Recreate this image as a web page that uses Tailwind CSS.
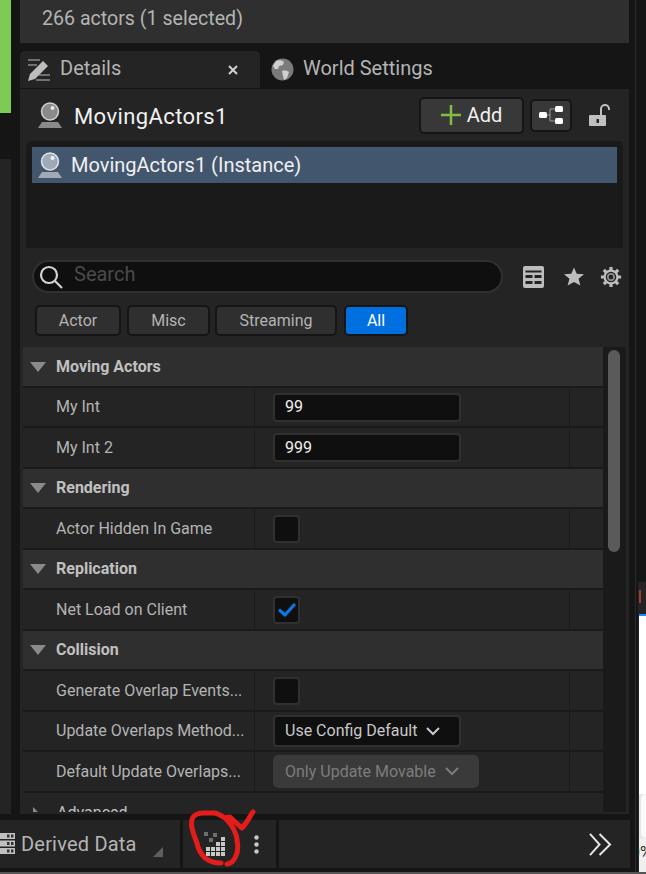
<!DOCTYPE html>
<html>
<head>
  <meta charset="UTF-8">
  <title>Details</title>
  <script src="https://cdn.jsdelivr.net/npm/@tailwindcss/browser@4"></script>
</head>
<body class="bg-[#151515]">
<div class="relative w-[646px] h-[874px] overflow-hidden bg-[#151515] font-['Roboto',sans-serif]">

  <div class="flex h-[814px]">
    <!-- left sliver of the viewport behind -->
    <div class="w-[11px] flex flex-col">
      <div class="h-[113px] bg-[#7ccb55]"></div>
      <div class="h-[46px]"></div>
      <div class="flex-1 bg-[#242424]"></div>
    </div>
    <div class="w-[9px]"></div>

    <div class="w-[609px] flex flex-col">
      <div class="h-[43px] bg-[#2f2f2f] pl-[22px] flex items-center text-[19.6px] text-[#b4b4b4] pb-[6px]">266 actors (1 selected)</div>

      <!-- tabs -->
      <div class="h-[37px] mt-[8px] flex">
        <div class="w-[240px] bg-[#242424] rounded-t-[5px] flex items-center pl-[7px] pr-[22px]">
          <svg width="24" height="24" viewBox="0 0 24 24" fill="none">
            <path d="M1 2h12M1 7h9M12 17h11M9 22h14" stroke="#8a8a8a" stroke-width="1.500"/>
            <path d="M1 23l2-7L16 3l5 5L8 21z" fill="#bdbdbd"/>
          </svg>
          <span class="ml-[9px] pb-[3px] text-[20px] text-[#b4b4b4] flex-1">Details</span>
          <svg width="10" height="10" viewBox="0 0 10 10"><path d="M1 1l8 8M9 1l-8 8" stroke="#d2d2d2" stroke-width="2"/></svg>
        </div>
        <div class="flex items-center pl-[11px]">
          <svg width="23" height="23" viewBox="0 0 23 23">
            <circle cx="11.5" cy="11.5" r="11" fill="#7b7b7b"/>
            <path d="M5 3c3-1 6-1 8 1l-1 3-4 1-1 3-3 0-2-3zM11 13c3-1 6 0 7 1l-2 6-3 2-1-4z" fill="#cfcfcf"/>
          </svg>
          <span class="ml-[9px] pb-[3px] text-[20px] text-[#b4b4b4]">World Settings</span>
        </div>
      </div>

      <!-- panel -->
      <div class="flex-1 mt-[1px] bg-[#242424] flex flex-col min-h-0">
        <div class="h-[52px] flex items-center pl-[18px] shrink-0">
          <svg width="24" height="26" viewBox="0 0 24 26">
            <circle cx="12" cy="9.500" r="8.500" fill="#8a8a8a" stroke="#d0d0d0" stroke-width="1.500"/>
            <circle cx="14.500" cy="6" r="2" fill="#e8e8e8"/>
            <path d="M4 20h16l4 6H0z" fill="#8a8a8a"/>
          </svg>
          <span class="ml-[12px] pt-[2px] text-[22px] tracking-[0.4px] text-[#f0f0f0]">MovingActors1</span>
          <div class="ml-auto flex items-center">
            <div class="w-[105px] h-[37px] rounded-[5px] bg-[#383838] border-2 border-[#151515] flex items-center justify-center gap-[6px] text-[20px] text-[#f0f0f0]">
              <svg width="20" height="20" viewBox="0 0 20 20"><path d="M10 0v20M0 10h20" stroke="#7fbf3f" stroke-width="2.500"/></svg>
              Add
            </div>
            <div class="ml-[6px] w-[42px] h-[33px] rounded-[5px] bg-[#383838] border-2 border-[#151515] flex items-center justify-center">
              <svg width="24" height="18" viewBox="0 0 24 18">
                <path d="M8 9h3M11 3h5M11 15h5M11 3v12" stroke="#9a9a9a" stroke-width="1" fill="none"/>
                <rect x="0" y="6" width="8" height="6" rx="1.500" fill="#fff"/>
                <rect x="16" y="0" width="8" height="6" rx="1.500" fill="#fff"/>
                <rect x="16" y="12" width="8" height="6" rx="1.500" fill="#fff"/>
              </svg>
            </div>
            <svg class="ml-[17px] mr-[18px]" width="22" height="22" viewBox="0 0 22 22">
              <rect x="0" y="11" width="17" height="11" rx="1" fill="#c0c0c0"/>
              <rect x="7.500" y="15" width="2.500" height="4" fill="#242424"/>
              <path d="M12 11V5a4 4 0 0 1 8 0v1" fill="none" stroke="#c0c0c0" stroke-width="2"/>
            </svg>
          </div>
        </div>

        <!-- selection list -->
        <div class="mx-[6px] h-[107px] shrink-0 rounded-t-[5px] bg-[#1a1a1a] pt-[6px] px-[6px]">
          <div class="h-[36px] bg-[#42566e] flex items-center text-[20px] text-[#f0f0f0]">
            <svg class="ml-[6px]" width="24" height="26" viewBox="0 0 24 26">
              <circle cx="12" cy="9.500" r="8.500" fill="#a0aab6" stroke="#dfe3e8" stroke-width="1.500"/>
              <circle cx="14.500" cy="6" r="2" fill="#f0f0f0"/>
              <path d="M4 20h16l4 6H0z" fill="#a0aab6"/>
            </svg>
            <span class="ml-[9px]">MovingActors1 (Instance)</span>
          </div>
        </div>

        <!-- search -->
        <div class="flex items-center h-[33px] mt-[12px] pl-[12px] shrink-0">
          <div class="w-[471px] h-[33px] rounded-full bg-[#0f0f0f] border-2 border-[#303030] flex items-center pl-[5px]">
            <svg width="24" height="24" viewBox="0 0 24 24" fill="none" stroke="#d2d2d2" stroke-width="2.200">
              <circle cx="10" cy="10" r="8"/><path d="M16 16l7 7"/>
            </svg>
            <span class="ml-[11px] pb-[5px] text-[20px] text-[#4a4a4a]">Search</span>
          </div>
          <svg class="ml-[20px]" width="21" height="22" viewBox="0 0 21 22">
            <rect x="0" y="0" width="21" height="22" rx="2" fill="#bdbdbd"/>
            <rect x="2.500" y="4.500" width="16" height="2" fill="#242424"/>
            <rect x="2.500" y="9" width="7" height="3" fill="#242424"/><rect x="11.500" y="9" width="7" height="3" fill="#242424"/>
            <rect x="2.500" y="15" width="7" height="3" fill="#242424"/><rect x="11.500" y="15" width="7" height="3" fill="#242424"/>
          </svg>
          <svg class="ml-[20px]" width="20" height="19" viewBox="0 0 22 20">
            <path d="M11 0l3 7 8 .6-6 5 2 7.400-7-4-7 4 2-7.400-6-5 8-.6z" fill="#bdbdbd"/>
          </svg>
          <svg class="ml-[16px]" width="22" height="22" viewBox="0 0 24 24" fill="none">
            <path d="M12 1v5M12 18v5M1 12h5M18 12h5M4.200 4.200l3.500 3.500M16.300 16.300l3.500 3.500M4.200 19.800l3.500-3.500M16.300 7.700l3.500-3.500" stroke="#bdbdbd" stroke-width="3.500"/>
            <circle cx="12" cy="12" r="7" fill="#242424" stroke="#bdbdbd" stroke-width="2.500"/>
            <circle cx="12" cy="12" r="3.500" stroke="#8a8a8a" stroke-width="2"/>
          </svg>
        </div>

        <!-- category pills -->
        <div class="flex items-center pl-[15px] mt-[12px] h-[31px] shrink-0 text-[16px] text-[#b4b4b4]">
          <div class="w-[86px] h-[31px] rounded-[5px] bg-[#2f2f2f] border-2 border-[#151515] flex items-center justify-center">Actor</div>
          <div class="ml-[6px] w-[83px] h-[31px] rounded-[5px] bg-[#2f2f2f] border-2 border-[#151515] flex items-center justify-center">Misc</div>
          <div class="ml-[5px] w-[122px] h-[31px] rounded-[5px] bg-[#2f2f2f] border-2 border-[#151515] flex items-center justify-center">Streaming</div>
          <div class="ml-[7px] w-[64px] h-[31px] rounded-[5px] bg-[#0070e0] border-2 border-[#151515] flex items-center justify-center text-white">All</div>
        </div>

        <!-- property table -->
        <div class="mt-[11px] flex-1 min-h-0 flex px-[3px] pb-[2px]">
          <div class="w-[580px] flex flex-col overflow-hidden text-[16px]">

            <div class="h-[40.500px] shrink-0 pt-px bg-[#2f2f2f] border-b-2 border-[#1a1a1a] flex items-center font-bold text-[#c0c0c0]">
              <svg class="ml-[7px]" width="16" height="10" viewBox="0 0 16 10"><path d="M0 0h16l-8 10z" fill="#8a8a8a"/></svg>
              <span class="ml-[10px]">Moving Actors</span>
            </div>
            <div class="h-[40.500px] shrink-0 pt-px border-b-2 border-[#1a1a1a] flex">
              <div class="w-[232px] border-r border-[#1a1a1a] pl-[33px] flex items-center text-[#b4b4b4]">My Int</div>
              <div class="w-[315px] border-r border-[#1a1a1a] pl-[18px] flex items-center">
                <div class="w-[188px] h-[29px] rounded-[4px] bg-[#0f0f0f] border-2 border-[#303030] pl-[10px] flex items-center text-[#f0f0f0]">99</div>
              </div>
            </div>
            <div class="h-[40.500px] shrink-0 pt-px border-b-2 border-[#1a1a1a] flex">
              <div class="w-[232px] border-r border-[#1a1a1a] pl-[33px] flex items-center text-[#b4b4b4]">My Int 2</div>
              <div class="w-[315px] border-r border-[#1a1a1a] pl-[18px] flex items-center">
                <div class="w-[188px] h-[29px] rounded-[4px] bg-[#0f0f0f] border-2 border-[#303030] pl-[10px] flex items-center text-[#f0f0f0]">999</div>
              </div>
            </div>

            <div class="h-[40.500px] shrink-0 pt-px bg-[#2f2f2f] border-b-2 border-[#1a1a1a] flex items-center font-bold text-[#c0c0c0]">
              <svg class="ml-[7px]" width="16" height="10" viewBox="0 0 16 10"><path d="M0 0h16l-8 10z" fill="#8a8a8a"/></svg>
              <span class="ml-[10px]">Rendering</span>
            </div>
            <div class="h-[40.500px] shrink-0 pt-px border-b-2 border-[#1a1a1a] flex">
              <div class="w-[232px] border-r border-[#1a1a1a] pl-[33px] flex items-center text-[#b4b4b4]">Actor Hidden In Game</div>
              <div class="w-[315px] border-r border-[#1a1a1a] pl-[18px] flex items-center">
                <div class="w-[27px] h-[28px] rounded-[4px] bg-[#0f0f0f] border-2 border-[#303030]"></div>
              </div>
            </div>

            <div class="h-[40.500px] shrink-0 pt-px bg-[#2f2f2f] border-b-2 border-[#1a1a1a] flex items-center font-bold text-[#c0c0c0]">
              <svg class="ml-[7px]" width="16" height="10" viewBox="0 0 16 10"><path d="M0 0h16l-8 10z" fill="#8a8a8a"/></svg>
              <span class="ml-[10px]">Replication</span>
            </div>
            <div class="h-[40.500px] shrink-0 pt-px border-b-2 border-[#1a1a1a] flex">
              <div class="w-[232px] border-r border-[#1a1a1a] pl-[33px] flex items-center text-[#b4b4b4]">Net Load on Client</div>
              <div class="w-[315px] border-r border-[#1a1a1a] pl-[18px] flex items-center">
                <div class="w-[27px] h-[28px] rounded-[4px] bg-[#0f0f0f] border-2 border-[#303030] flex items-center justify-center">
                  <svg width="18" height="14" viewBox="0 0 18 14"><path d="M2 7.500l5 4.500 9-10" fill="none" stroke="#0a78e6" stroke-width="3.200" stroke-linecap="round" stroke-linejoin="round"/></svg>
                </div>
              </div>
            </div>

            <div class="h-[40.500px] shrink-0 pt-px bg-[#2f2f2f] border-b-2 border-[#1a1a1a] flex items-center font-bold text-[#c0c0c0]">
              <svg class="ml-[7px]" width="16" height="10" viewBox="0 0 16 10"><path d="M0 0h16l-8 10z" fill="#8a8a8a"/></svg>
              <span class="ml-[10px]">Collision</span>
            </div>
            <div class="h-[40.500px] shrink-0 pt-px border-b-2 border-[#1a1a1a] flex">
              <div class="w-[232px] border-r border-[#1a1a1a] pl-[33px] flex items-center text-[#b4b4b4]">Generate Overlap Events...</div>
              <div class="w-[315px] border-r border-[#1a1a1a] pl-[18px] flex items-center">
                <div class="w-[27px] h-[28px] rounded-[4px] bg-[#0f0f0f] border-2 border-[#303030]"></div>
              </div>
            </div>
            <div class="h-[40.500px] shrink-0 pt-px border-b-2 border-[#1a1a1a] flex">
              <div class="w-[232px] border-r border-[#1a1a1a] pl-[33px] flex items-center text-[#b4b4b4]">Update Overlaps Method...</div>
              <div class="w-[315px] border-r border-[#1a1a1a] pl-[18px] flex items-center">
                <div class="w-[188px] h-[32px] rounded-[4px] bg-[#0f0f0f] border-2 border-[#303030] pl-[10px] flex items-center text-[#c8c8c8]">
                  Use Config Default
                  <svg class="ml-[9px]" width="14" height="9" viewBox="0 0 14 9"><path d="M1 1l6 6 6-6" fill="none" stroke="#c8c8c8" stroke-width="2"/></svg>
                </div>
              </div>
            </div>
            <div class="h-[40.500px] shrink-0 pt-px border-b-2 border-[#1a1a1a] flex">
              <div class="w-[232px] border-r border-[#1a1a1a] pl-[33px] flex items-center text-[#b4b4b4]">Default Update Overlaps...</div>
              <div class="w-[315px] border-r border-[#1a1a1a] pl-[18px] flex items-center">
                <div class="w-[206px] h-[33px] rounded-[5px] bg-[#3a3a3a] pl-[12px] flex items-center text-[#7c7c7c]">
                  Only Update Movable
                  <svg class="ml-[9px]" width="14" height="9" viewBox="0 0 14 9"><path d="M1 1l6 6 6-6" fill="none" stroke="#7c7c7c" stroke-width="2"/></svg>
                </div>
              </div>
            </div>

            <div class="h-[40.500px] shrink-0 flex items-center text-[#c0c0c0]">
              <svg class="ml-[10px]" width="11" height="11" viewBox="0 0 11 11"><path d="M0 0l11 11H0z" fill="#8a8a8a"/></svg>
              <span class="ml-[13px]">Advanced</span>
            </div>
          </div>
          <!-- scrollbar -->
          <div class="w-[23px] bg-[#1a1a1a] pt-[3px] pl-[5px]">
            <div class="w-[12px] h-[202px] rounded-full bg-[#5a5a5a]"></div>
          </div>
        </div>
      </div>
    </div>
  </div>

  <!-- status bar -->
  <div class="mt-[6px] h-[48px] w-[630px] bg-[#242424] flex items-center text-[20px] text-[#b4b4b4]">
    <div class="w-[180px] h-full flex items-center">
      <svg class="-mt-px" width="15" height="21" viewBox="0 0 15 21">
        <g fill="#c0c0c0"><rect y="0" width="15" height="6"/><rect y="7.500" width="15" height="6"/><rect y="15" width="15" height="6"/></g>
        <g fill="#333"><rect x="7" y="1.500" width="2.500" height="3"/><rect x="11" y="1.500" width="2.500" height="3"/><rect x="7" y="9" width="2.500" height="3"/><rect x="11" y="9" width="2.500" height="3"/><rect x="7" y="16.500" width="2.500" height="3"/><rect x="11" y="16.500" width="2.500" height="3"/></g>
      </svg>
      <span class="ml-[6px] tracking-[0.2px]">Derived Data</span>
      <svg class="ml-[16px] mt-[16px]" width="10" height="10" viewBox="0 0 10 10"><path d="M10 0v10H0z" fill="#5f5f5f"/></svg>
    </div>
    <div class="w-[3px] h-full bg-[#151515]"></div>
    <div class="w-[93px] h-full flex items-center pl-[20px]">
      <svg width="22" height="24" viewBox="0 0 22 24">
        <g fill="#c8c8c8">
          <rect x="3" y="15" width="4" height="4"/><rect x="8" y="15" width="4" height="4"/><rect x="13" y="15" width="4" height="4"/><rect x="18" y="15" width="4" height="4"/>
          <rect x="3" y="20" width="4" height="4"/><rect x="8" y="20" width="4" height="4"/><rect x="13" y="20" width="4" height="4"/><rect x="18" y="20" width="4" height="4"/>
          <rect x="13" y="10" width="4" height="4"/><rect x="18" y="10" width="4" height="4"/><rect x="18" y="5" width="4" height="4"/>
        </g>
        <g fill="#6e6e6e"><rect x="1" y="0" width="4" height="4"/><rect x="10" y="1" width="4" height="4"/><rect x="6" y="6" width="4" height="4"/></g>
      </svg>
      <svg class="ml-[29px]" width="5" height="19" viewBox="0 0 5 19" fill="#c8c8c8"><circle cx="2.500" cy="2.500" r="2.200"/><circle cx="2.500" cy="9.500" r="2.200"/><circle cx="2.500" cy="16.500" r="2.200"/></svg>
    </div>
    <div class="w-[3px] h-full bg-[#151515]"></div>
    <div class="flex-1 flex justify-end pr-[18px]">
      <svg width="23" height="23" viewBox="0 0 24 24" fill="none" stroke="#e8e8e8" stroke-width="2"><path d="M1 1l10 11L1 23M11 1l11 11-11 11"/></svg>
    </div>
  </div>
  <div class="h-[4px]"></div>
  <div class="h-[2px] bg-[#555555]"></div>

  <!-- edge of the window behind, on the right -->
  <div class="absolute left-[635px] top-0 w-px h-[872px] bg-[#2a2a2a]"></div>
  <div class="absolute left-[638px] top-[582px] w-[8px] h-[290px] flex flex-col overflow-hidden bg-[#242424]">
    <div class="h-[8px]"></div>
    <div class="ml-[1px] h-[13px] w-[2px] bg-[#a83a2a]"></div>
    <div class="h-[11px]"></div>
    <div class="h-[2px] ml-[1px] bg-[#1a8cff]"></div>
    <div class="h-[178px] ml-[1px] bg-white"></div>
    <div class="h-[44px] ml-[1px] bg-[#e6e6e6] pl-[2px]"><div class="h-full bg-[#fafafa] rounded-l-[6px]"></div></div>
    <div class="flex-1 ml-[1px] bg-[#efefef] text-[#333333] text-[16px] -indent-[8px] leading-[30px] whitespace-nowrap">0%</div>
  </div>

  <!-- red annotation drawn over the screenshot -->
  <svg class="absolute left-0 top-0" width="646" height="874" viewBox="0 0 646 874" fill="none">
    <path d="M221 863c-7 0-12-2-16-5-4-4-7-9-8-15-2-5-4-10-5-15-1-5 0-9 1-11 3-3 6-4 10-4h12c4 1 7 3 10 5 3 3 6 6 8 10 2 4 4 8 4 12 1 5 1 9 0 13-1 4-3 7-5 9-2 1-3 2-5 2M225 818c2-1 4-1 5-1 4 4 8 8 12 11 2-2 4-5 6-8 2-3 3-6 5-8" stroke="#e31c1c" stroke-width="5" stroke-linecap="round" stroke-linejoin="round"/>
  </svg>
</div>
</body>
</html>
